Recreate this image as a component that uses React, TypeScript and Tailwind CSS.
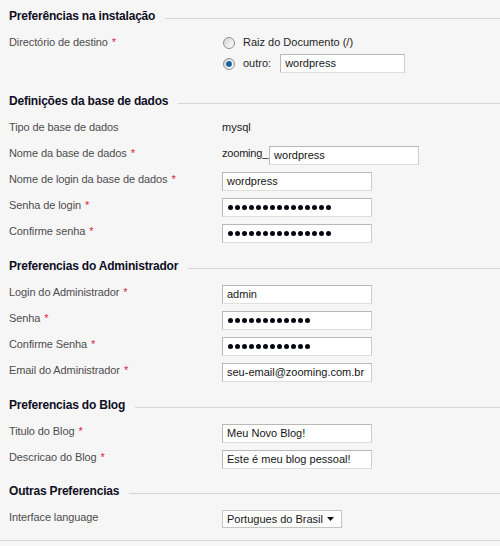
import React from 'react';

const font = "font-['Liberation_Sans',Arial,sans-serif]";

function Heading({ title, className = '' }: { title: string; className?: string }) {
  return (
    <div className={`flex h-[26px] items-center pl-[9px] ${className}`}>
      <span className="text-[12px] font-bold tracking-[-0.2px] text-[#0f0f1f] whitespace-nowrap">{title}</span>
      <div className="ml-[10px] mt-[4px] h-px flex-1 bg-[#d6d6d6]" />
    </div>
  );
}

function Req() {
  return <span className="ml-[4px] text-[#d8243c]">*</span>;
}

function Row({ label, required, children }: { label: string; required?: boolean; children?: React.ReactNode }) {
  return (
    <div className="flex h-[26px] items-center">
      <div className="w-[222px] pl-[9px] text-[11px] tracking-[-0.1px] text-[#4d4d4d] whitespace-nowrap">
        {label}
        {required && <Req />}
      </div>
      {children}
    </div>
  );
}

function Field({ value, w = 'w-[150px]' }: { value: string; w?: string }) {
  return (
    <div
      className={`${w} mt-[4px] flex h-[19px] items-center border border-[#b8b8b8] border-b-[#dedede] border-r-[#cdcdcd] bg-white pl-[4px] text-[11px] text-[#151515]`}
    >
      {value}
    </div>
  );
}

function Secret({ count }: { count: number }) {
  return (
    <div className="mt-[4px] flex h-[19px] w-[150px] items-center gap-[2px] border border-[#b8b8b8] border-b-[#dedede] border-r-[#cdcdcd] bg-white pl-[5px]">
      {Array.from({ length: count }).map((_, i) => (
        <span key={i} className="h-[5px] w-[5px] rounded-full bg-[#050510]" />
      ))}
    </div>
  );
}

function Radio({ checked }: { checked?: boolean }) {
  return (
    <span className="flex h-[12px] w-[12px] items-center justify-center rounded-full border border-[#8f8f8f] bg-gradient-to-br from-[#d4d4d4] to-white">
      {checked && <span className="h-[6px] w-[6px] rounded-full bg-[radial-gradient(circle,#1c5a98_35%,#4a94d6_100%)]" />}
    </span>
  );
}

export default function App() {
  return (
    <div className={`${font} min-h-[546px] w-[500px] bg-[#f7f6f7] pt-[3px] leading-none`}>
      <Heading title="Preferências na instalação" />
      <div className="mt-[3px] flex">
        <div className="flex h-[21px] w-[222px] items-center pl-[9px] text-[11px] tracking-[-0.1px] text-[#4d4d4d]">
          Directório de destino
          <Req />
        </div>
        <div className="flex flex-col">
          <div className="flex h-[21px] items-center pl-[1px] text-[11px] text-[#1e1e1e]">
            <Radio />
            <span className="ml-[8px]">Raiz do Documento (/)</span>
          </div>
          <div className="flex h-[21px] items-center pl-[1px] text-[11px] text-[#1e1e1e]">
            <Radio checked />
            <span className="ml-[8px] mr-[9px]">outro:</span>
            <div className="flex h-[19px] w-[125px] items-center border border-[#b8b8b8] border-b-[#dedede] border-r-[#cdcdcd] bg-white pl-[4px] text-[#151515]">
              wordpress
            </div>
          </div>
        </div>
      </div>

      <Heading title="Definições da base de dados" className="mt-[14px]" />
      <Row label="Tipo de base de dados">
        <span className="text-[11px] text-[#222]">mysql</span>
      </Row>
      <Row label="Nome da base de dados" required>
        <span className="text-[11px] tracking-[-0.2px] text-[#222]">zooming_</span>
        <div className="ml-[1px]">
          <Field value="wordpress" />
        </div>
      </Row>
      <Row label="Nome de login da base de dados" required>
        <Field value="wordpress" />
      </Row>
      <Row label="Senha de login" required>
        <Secret count={15} />
      </Row>
      <Row label="Confirme senha" required>
        <Secret count={15} />
      </Row>

      <Heading title="Preferencias do Administrador" className="mt-[9px]" />
      <Row label="Login do Administrador" required>
        <Field value="admin" />
      </Row>
      <Row label="Senha" required>
        <Secret count={12} />
      </Row>
      <Row label="Confirme Senha" required>
        <Secret count={12} />
      </Row>
      <Row label="Email do Administrador" required>
        <Field value="seu-email@zooming.com.br" />
      </Row>

      <Heading title="Preferencias do Blog" className="mt-[9px]" />
      <Row label="Titulo do Blog" required>
        <Field value="Meu Novo Blog!" />
      </Row>
      <Row label="Descricao do Blog" required>
        <Field value="Este é meu blog pessoal!" />
      </Row>

      <Heading title="Outras Preferencias" className="mt-[8px]" />
      <Row label="Interface language">
        <div className="mt-[4px] flex h-[18px] w-[120px] items-center justify-between border border-[#c4c4c4] bg-white pl-[4px] pr-[7px] text-[11px] text-[#151515]">
          <span>Portugues do Brasil</span>
          <svg width="7" height="4" viewBox="0 0 7 4">
            <path d="M0 0h7L3.5 4z" fill="#111" />
          </svg>
        </div>
      </Row>
      <div className="mt-[10px] h-px bg-[#d6d6d6]" />
    </div>
  );
}
